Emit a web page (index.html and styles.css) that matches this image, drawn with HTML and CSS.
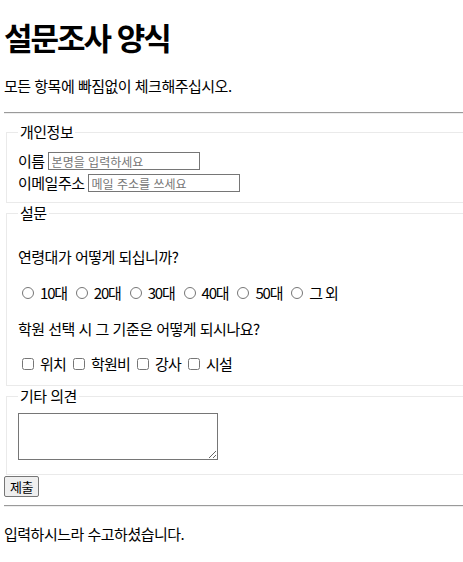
FILE: index.html
```html
<!DOCTYPE html>
<html lang="ko">
<head>
<meta charset="utf-8">
<title>설문조사 양식</title>
<link rel="stylesheet" href="styles.css">
</head>
<body>
<div class="page">
  <h1 class="title">설문조사 양식</h1>
  <p class="intro">모든 항목에 빠짐없이 체크해주십시오.</p>
  <hr class="rule rule-top">
  <form class="survey">
    <fieldset class="group group-info">
      <legend class="legend">개인정보</legend>
      <div class="field-row">
        <label class="label" for="name">이름</label>
        <input class="text-input" id="name" type="text" placeholder="본명을 입력하세요">
      </div>
      <div class="field-row">
        <label class="label" for="email">이메일주소</label>
        <input class="text-input" id="email" type="text" placeholder="메일 주소를 쓰세요">
      </div>
    </fieldset>
    <fieldset class="group group-survey">
      <legend class="legend">설문</legend>
      <p class="question">연령대가 어떻게 되십니까?</p>
      <div class="options options-radio">
        <label class="option"><input class="radio" type="radio" name="age">10대</label>
        <label class="option"><input class="radio" type="radio" name="age">20대</label>
        <label class="option"><input class="radio" type="radio" name="age">30대</label>
        <label class="option"><input class="radio" type="radio" name="age">40대</label>
        <label class="option"><input class="radio" type="radio" name="age">50대</label>
        <label class="option"><input class="radio" type="radio" name="age">그 외</label>
      </div>
      <p class="question">학원 선택 시 그 기준은 어떻게 되시나요?</p>
      <div class="options options-check">
        <label class="option"><input class="check" type="checkbox">위치</label>
        <label class="option"><input class="check" type="checkbox">학원비</label>
        <label class="option"><input class="check" type="checkbox">강사</label>
        <label class="option"><input class="check" type="checkbox">시설</label>
      </div>
    </fieldset>
    <fieldset class="group group-etc">
      <legend class="legend">기타 의견</legend>
      <textarea class="comment"></textarea>
    </fieldset>
    <button class="submit" type="submit">제출</button>
  </form>
  <hr class="rule rule-bottom">
  <p class="outro">입력하시느라 수고하셨습니다.</p>
</div>
</body>
</html>
```

FILE: styles.css
```css
html, body {
  margin: 0;
  padding: 0;
  overflow: hidden;
  background: #fff;
}
body {
  font-family: "Noto Sans CJK KR", "Noto Sans", sans-serif;
  font-size: 15px;
  color: #000;
  letter-spacing: -0.5px;
}
.page {
  width: 520px;
  padding: 0 4px;
}
.title {
  font-size: 31px;
  font-weight: 700;
  line-height: 40px;
  margin: 17px 0 0 0;
  letter-spacing: -2px;
}
.intro {
  line-height: 20px;
  margin: 19px 0 0 0;
}
.rule {
  border: 0;
  border-top: 1px solid #9a9a9a;
  border-bottom: 1px solid #eee;
  height: 0;
}
.rule-top {
  margin: 16px 0 0 0;
}
.rule-bottom {
  margin: 8px 0 0 0;
}
.survey {
  margin: 0;
}
.group {
  margin: 0 2px;
  padding: 0 11px 8px 11px;
  border: 1px solid #eaeaea;
  min-width: 0;
}
.group-info {
  margin-top: 8px;
  padding-top: 8px;
  padding-bottom: 8px;
}
.group-survey {
  margin-top: 0;
  padding-top: 9px;
  padding-bottom: 9px;
}
.group-etc {
  margin-top: 0;
  padding-bottom: 14px;
}
.legend {
  padding: 0 2px;
  line-height: 20px;
}
.field-row {
  display: flex;
  align-items: center;
  gap: 3px;
  height: 22px;
}
.label {
  line-height: 20px;
}
.text-input {
  width: 152px;
  height: 18px;
  box-sizing: border-box;
  border: 1px solid #767676;
  padding: 0 3px;
  font-family: inherit;
  font-size: 12px;
  letter-spacing: 0;
  margin: 0;
}
.text-input::placeholder {
  color: #757575;
}
.question {
  margin: 16px 0 0 0;
  line-height: 20px;
}
.group-survey .question:first-of-type {
  margin-top: 15px;
}
.options {
  display: flex;
  align-items: center;
  line-height: 20px;
}
.options-radio {
  margin: 16px 0 0 0;
  gap: 5px;
}
.options-check {
  margin: 15px 0 0 0;
  gap: 3px;
}
.option {
  display: inline-flex;
  align-items: center;
}
.options-radio .option {
  letter-spacing: -1.2px;
}
.options-check .option {
  letter-spacing: -0.8px;
}
.radio, .check {
  margin: 0 6px 0 4px;
  width: 12px;
  height: 12px;
}
.group-survey .options:last-child {
  margin-bottom: 2px;
}
.comment {
  display: block;
  width: 200px;
  height: 47px;
  box-sizing: border-box;
  border: 1px solid #767676;
  margin: 7px 0 0 0;
  resize: both;
}
.submit {
  display: block;
  margin: 1px 0 0 0;
  font-family: inherit;
  font-size: 13px;
  letter-spacing: -0.5px;
  height: 21px;
  padding: 0 5px;
  border: 1px solid #767676;
  border-radius: 2px;
  background: #efefef;
  color: #000;
}
.outro {
  margin: 17px 0 0 0;
  line-height: 20px;
}
```
